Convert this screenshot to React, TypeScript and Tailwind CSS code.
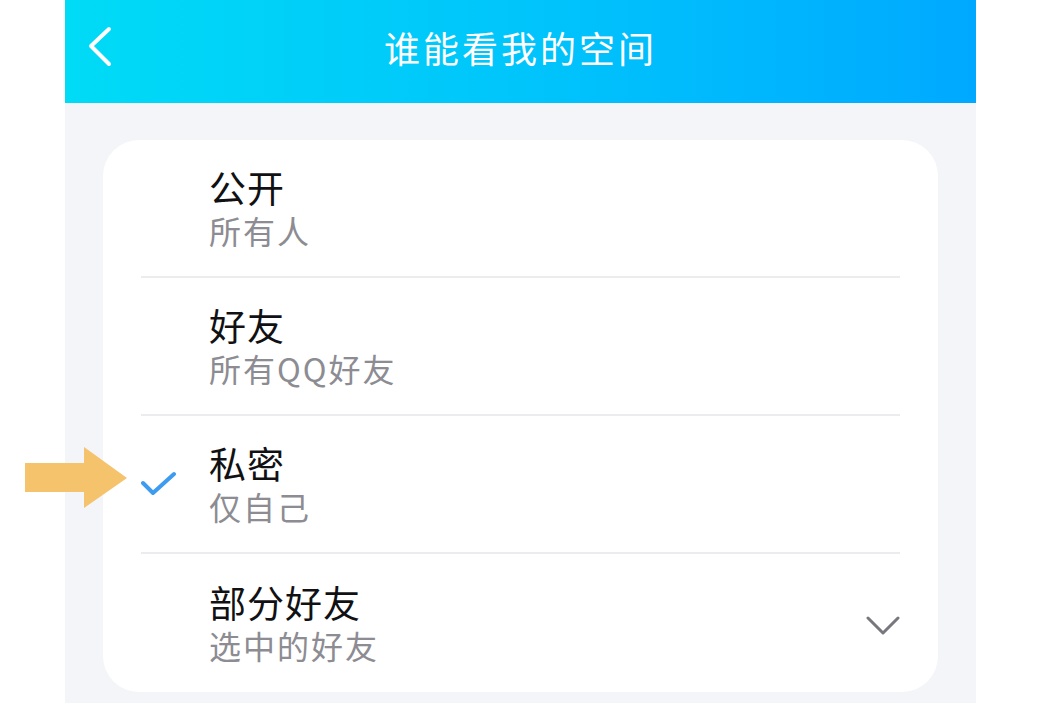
import React from 'react'

type Option = {
  title: string
  desc: string
  checked?: boolean
  expandable?: boolean
}

const options: Option[] = [
  { title: '公开', desc: '所有人' },
  { title: '好友', desc: '所有QQ好友' },
  { title: '私密', desc: '仅自己', checked: true },
  { title: '部分好友', desc: '选中的好友', expandable: true },
]

const font = { fontFamily: '"Noto Sans CJK SC", "Noto Sans", sans-serif' }

export default function App() {
  return (
    <div className="relative h-[703px] w-[1054px] overflow-hidden bg-white" style={font}>
      <div className="ml-[65px] flex h-full w-[911px] flex-col bg-[#f4f5f9]">
        {/* header */}
        <div className="relative flex h-[103px] shrink-0 items-center justify-center bg-gradient-to-r from-[#00dbf6] via-[#00c5fb] to-[#00a9ff]">
          <svg className="absolute left-[20px] top-[25px]" width="30" height="44" viewBox="0 0 30 44">
            <polyline points="24,4 6,21 24,39" fill="none" stroke="white" strokeWidth="4" strokeLinecap="round" strokeLinejoin="round" />
          </svg>
          <h1 className="-mt-[10px] text-[36px] leading-none tracking-[3px] text-white">谁能看我的空间</h1>
        </div>

        {/* options card */}
        <div className="mx-[38px] mt-[37px] rounded-[36px] bg-white px-[38px]">
          {options.map((opt, i) => (
            <div
              key={opt.title}
              className={`flex h-[138px] items-center ${i < options.length - 1 ? 'border-b-2 border-[#ececee]' : ''}`}
            >
              <div className="flex w-[68px] shrink-0 items-center">
                {opt.checked && (
                  <svg className="mt-[2px]" width="36" height="28" viewBox="0 0 36 28">
                    <polyline points="2,12 12,22 33,3" fill="none" stroke="#3d9cf0" strokeWidth="4" strokeLinecap="round" strokeLinejoin="round" />
                  </svg>
                )}
              </div>
              <div className="flex flex-1 flex-col">
                <span className="text-[37px] leading-[44px] tracking-[1px] text-[#111114]">{opt.title}</span>
                <span className="text-[32px] leading-[42px] tracking-[2px] text-[#8c8c92]">{opt.desc}</span>
              </div>
              {opt.expandable && (
                <svg className="mt-[6px]" width="34" height="22" viewBox="0 0 34 22">
                  <polyline points="2,3 17,18 32,3" fill="none" stroke="#77777d" strokeWidth="3" strokeLinecap="round" strokeLinejoin="round" />
                </svg>
              )}
            </div>
          ))}
        </div>
      </div>

      {/* pointer arrow */}
      <svg className="absolute left-[25px] top-[447px]" width="103" height="62" viewBox="0 0 103 62">
        <polygon points="0,16 59,16 59,0 102,31 59,61 59,45 0,45" fill="#f5c36c" />
      </svg>
    </div>
  )
}
